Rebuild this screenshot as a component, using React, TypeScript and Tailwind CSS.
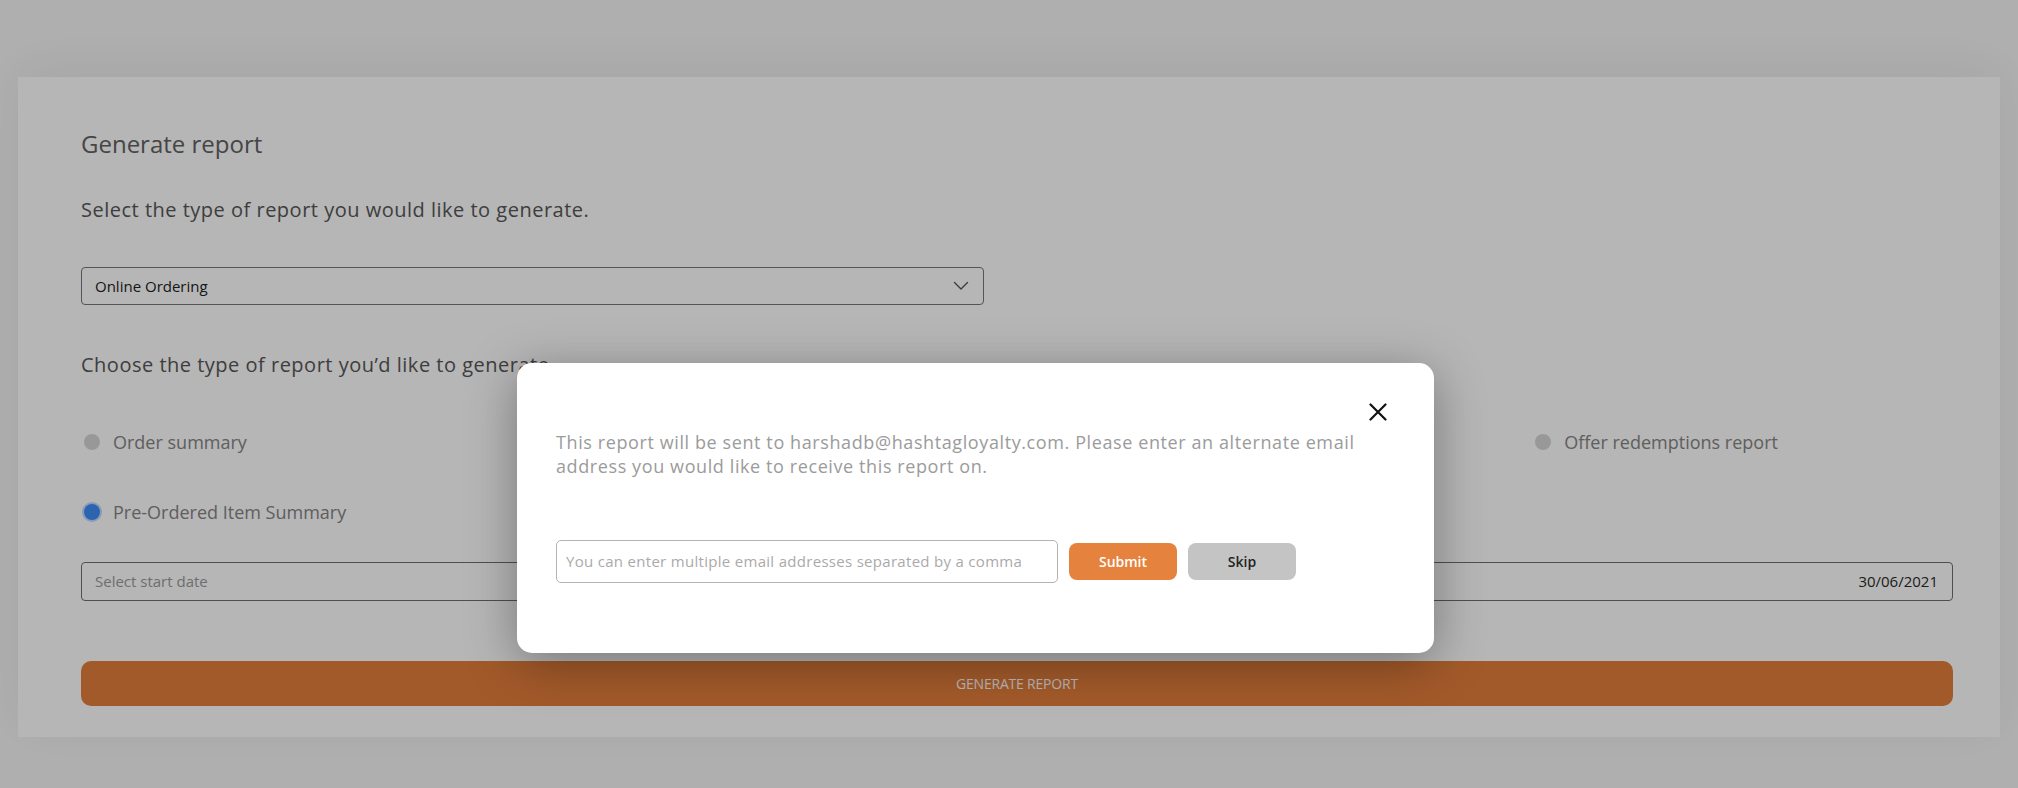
import React from "react";

const font = { fontFamily: '"Open Sans", "Noto Sans", sans-serif' };

function Radio({ label, checked }: { label: string; checked?: boolean }) {
  return (
    <div className="flex h-[24px] items-center">
      <span className="ml-[3px] flex h-[16px] w-[16px] items-center justify-center">
        {checked ? (
          <span className="h-[16px] w-[16px] rounded-full bg-[#3f8cf7] shadow-[0_0_0_2px_rgba(120,170,255,0.45)]" />
        ) : (
          <span className="h-[16px] w-[16px] rounded-full bg-[#d6d6d6]" />
        )}
      </span>
      <span className="ml-[13px] text-[18px] leading-[24px] text-[#858585]">{label}</span>
    </div>
  );
}

export default function App() {
  return (
    <div style={font} className="relative h-[788px] w-full overflow-hidden bg-[#f6f6f6]">
      <div className="pt-[77px]">
        <div className="mx-[18px] bg-white pb-[31px] pl-[63px] pr-[47px] pt-[52px] shadow-[0_-10px_50px_rgba(0,0,0,0.06)]">
          <h1 className="h-[29px] text-[24px] leading-[29px] text-[#626262]">Generate report</h1>
          <p className="mt-[40px] h-[24px] text-[20px] leading-[24px] tracking-[0.5px] text-[#575757]">
            Select the type of report you would like to generate.
          </p>
          <div className="mt-[45px] flex h-[38px] w-[903px] items-center justify-between rounded-[4px] border-[1.5px] border-[#777777] pl-[13px] pr-[14px]">
            <span className="text-[15px] font-medium text-[#222222]">Online Ordering</span>
            <svg width="16" height="10" viewBox="0 0 16 10" fill="none">
              <path d="M1.5 1.5 L8 8 L14.5 1.5" stroke="#555" strokeWidth="1.4" strokeLinecap="round" strokeLinejoin="round" />
            </svg>
          </div>
          <p className="mt-[48px] h-[24px] text-[20px] leading-[24px] tracking-[0.5px] text-[#575757]">
            Choose the type of report you’d like to generate
          </p>
          <div className="mt-[53px] grid grid-cols-4 gap-x-[63px] gap-y-[46px]">
            <Radio label="Order summary" />
            <Radio label="Order details report" />
            <Radio label="Customer report" />
            <Radio label="Offer redemptions report" />
            <Radio label="Pre-Ordered Item Summary" checked />
          </div>
          <div className="mt-[38px] grid grid-cols-2 gap-x-[40px]">
            <div className="flex h-[39px] items-center rounded-[4px] border-[1.5px] border-[#6f6f6f] px-[13px]">
              <span className="text-[15px] text-[#9a9a9a]">Select start date</span>
            </div>
            <div className="flex h-[39px] items-center justify-end rounded-[4px] border-[1.5px] border-[#6f6f6f] px-[14px]">
              <span className="text-[15px] font-medium text-[#2a2a2a]">30/06/2021</span>
            </div>
          </div>
          <button className="mt-[60px] flex h-[45px] w-full items-center justify-center rounded-[10px] bg-[#e57e3b]">
            <span className="text-[14px] tracking-[-0.2px] text-white">GENERATE REPORT</span>
          </button>
        </div>
      </div>

      <div className="absolute inset-0 bg-[rgba(0,0,0,0.285)]" />

      <div className="absolute left-[517px] top-[363px] h-[290px] w-[917px] rounded-[15px] bg-white pl-[39px] pt-[67px] shadow-[0_10px_50px_rgba(0,0,0,0.35)]">
        <button className="absolute right-[47px] top-[40px] h-[18px] w-[18px]">
          <svg width="18" height="18" viewBox="0 0 18 18">
            <path d="M1.5 1.5 L16.5 16.5 M16.5 1.5 L1.5 16.5" stroke="#111" strokeWidth="2.2" strokeLinecap="round" />
          </svg>
        </button>
        <p className="w-[840px] text-[18px] leading-[24px] tracking-[0.6px] text-[#9b9b9b]">
          This report will be sent to harshadb@hashtagloyalty.com. Please enter an alternate email address you would like to receive this report on.
        </p>
        <div className="mt-[62px] flex items-center gap-[11px]">
          <div className="flex h-[43px] w-[502px] items-center rounded-[5px] border border-[#b3b3b3] px-[9px]">
            <span className="text-[15px] tracking-[0.3px] text-[#aaaaaa]">You can enter multiple email addresses separated by a comma</span>
          </div>
          <button className="flex h-[37px] w-[108px] items-center justify-center rounded-[8px] bg-[#e5823d] text-[14px] font-semibold text-white">
            Submit
          </button>
          <button className="flex h-[37px] w-[108px] items-center justify-center rounded-[8px] bg-[#c4c4c4] text-[14px] font-semibold text-[#222222]">
            Skip
          </button>
        </div>
      </div>
    </div>
  );
}
